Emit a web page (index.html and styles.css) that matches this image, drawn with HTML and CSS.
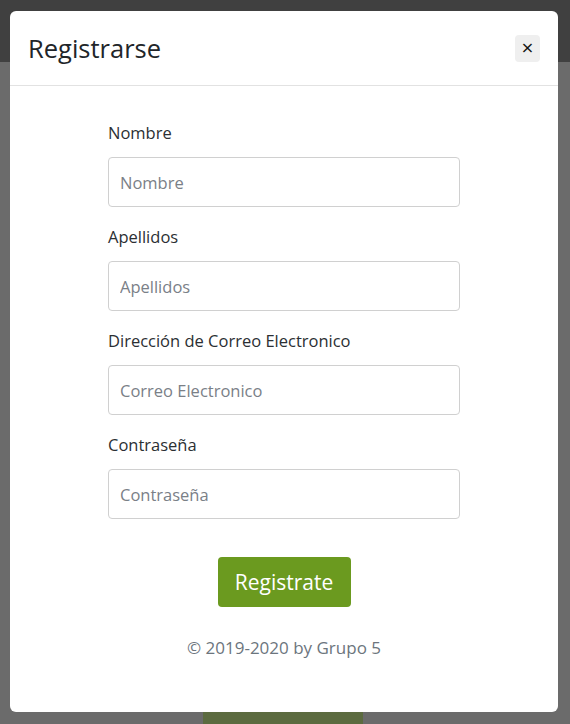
FILE: index.html
```html
<!DOCTYPE html>
<html lang="es">
<head>
<meta charset="utf-8">
<title>Registrarse</title>
<link rel="stylesheet" href="styles.css">
</head>
<body>
<div class="page">
  <div class="topbar"></div>
  <div class="content">
    <div class="behind-btn"></div>
  </div>
</div>
<div class="modal">
  <div class="modal-header">
    <h2 class="modal-title">Registrarse</h2>
    <button class="close" type="button">×</button>
  </div>
  <div class="modal-body">
    <form class="form">
      <div class="group">
        <label class="label">Nombre</label>
        <input class="input" type="text" placeholder="Nombre">
      </div>
      <div class="group">
        <label class="label">Apellidos</label>
        <input class="input" type="text" placeholder="Apellidos">
      </div>
      <div class="group">
        <label class="label">Dirección de Correo Electronico</label>
        <input class="input" type="email" placeholder="Correo Electronico">
      </div>
      <div class="group">
        <label class="label">Contraseña</label>
        <input class="input" type="password" placeholder="Contraseña">
      </div>
      <div class="actions">
        <button class="submit" type="button">Registrate</button>
      </div>
      <p class="copy">© 2019-2020 by Grupo 5</p>
    </form>
  </div>
</div>
</body>
</html>
```
FILE: styles.css
```css
* { box-sizing: border-box; }
html, body { margin: 0; padding: 0; }
body {
  width: 570px;
  height: 724px;
  overflow: hidden;
  font-family: "Open Sans", "Noto Sans", sans-serif;
  position: relative;
  background: #6b6b6b;
}
.page { height: 724px; display: flex; flex-direction: column; }
.topbar { height: 62px; background: #404040; }
.content { flex: 1; background: #6b6b6b; display: flex; flex-direction: column; justify-content: flex-end; align-items: center; }
.behind-btn { width: 160px; height: 12px; background: #5c6b40; margin-right: 4px; }
.modal {
  position: absolute;
  left: 10px;
  top: 11px;
  width: 548px;
  height: 701px;
  background: #fff;
  border-radius: 6px;
  display: flex;
  flex-direction: column;
}
.modal-header {
  height: 75px;
  border-bottom: 1px solid #e2e2e2;
  display: flex;
  align-items: center;
  justify-content: space-between;
  padding: 0 18px 0 18px;
}
.modal-title {
  margin: 0;
  font-size: 25.5px;
  font-weight: 400;
  color: #212529;
}
.close {
  width: 25px;
  height: 27px;
  border: none;
  border-radius: 4px;
  background: #efefef;
  color: #111;
  font-size: 16px;
  line-height: 1;
  padding: 0;
  font-family: "DejaVu Sans", sans-serif;
}
.modal-body { display: flex; justify-content: center; padding-top: 35px; }
.form { width: 352px; display: flex; flex-direction: column; }
.group { display: flex; flex-direction: column; margin-bottom: 18px; }
.label { font-size: 16.5px; color: #2b2f33; line-height: 24px; margin-bottom: 12px; }
.input {
  height: 50px;
  border: 1px solid #d0d0d0;
  border-radius: 4px;
  padding: 0 11px;
  font-size: 16.5px;
  font-family: inherit;
  color: #495057;
}
.input::placeholder { color: #7a8087; }
.actions { display: flex; justify-content: center; margin-top: 20px; }
.submit {
  width: 133px;
  height: 50px;
  background: #6b9a1f;
  color: #fff;
  border: none;
  border-radius: 4px;
  font-family: inherit;
  font-size: 21px;
}
.copy { text-align: center; margin: 30px 0 0; font-size: 17px; line-height: 22px; color: #6c757d; }
```
